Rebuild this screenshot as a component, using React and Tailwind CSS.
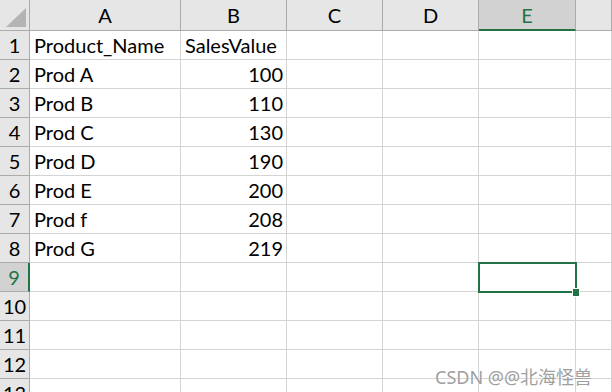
const cols = [
  { key: "A", w: "w-[151px]" },
  { key: "B", w: "w-[106px]" },
  { key: "C", w: "w-[96px]" },
  { key: "D", w: "w-[96px]" },
  { key: "E", w: "w-[97px]" },
  { key: "", w: "flex-1" },
];

const data = [
  ["Product_Name", "SalesValue"],
  ["Prod A", 100],
  ["Prod B", 110],
  ["Prod C", 130],
  ["Prod D", 190],
  ["Prod E", 200],
  ["Prod f", 208],
  ["Prod G", 219],
];

const rowCount = 13;

function Cell({ col, value }) {
  const isNum = typeof value === "number";
  return (
    <div
      className={`${col.w} shrink-0 h-full border-r border-[#d4d4d4] flex items-center overflow-visible whitespace-nowrap ${
        isNum ? "justify-end pr-[3px]" : "pl-[4px]"
      }`}
    >
      {value ?? ""}
    </div>
  );
}

export default function App() {
  return (
    <div
      className="w-[612px] h-[392px] overflow-hidden bg-white text-black text-[20px] relative"
      style={{ fontFamily: "Lato, 'Noto Sans', sans-serif" }}
    >
      {/* column headers */}
      <div className="flex h-[31px] bg-[#e6e6e6] border-b border-[#ababab]">
        <div className="w-[30px] shrink-0 border-r border-[#ababab] relative">
          <svg className="absolute left-[6px] top-[8px]" width="20" height="19" viewBox="0 0 20 19">
            <polygon points="20,0 20,19 0,19" fill="#b4b4b4" />
          </svg>
        </div>
        {cols.map((c, j) => (
          <div
            key={j}
            className={`${c.w} shrink-0 border-r border-[#ababab] flex items-center justify-center ${
              c.key === "E" ? "bg-[#d2d2d2] text-[#217346] border-b-2 border-b-[#217346] -mb-px" : ""
            }`}
          >
            {c.key}
          </div>
        ))}
      </div>

      {/* rows */}
      {Array.from({ length: rowCount }).map((_, i) => {
        const row = data[i] || [];
        const selected = i === 8;
        return (
          <div key={i} className="flex h-[29px] border-b border-[#d4d4d4]">
            <div
              className={`w-[30px] shrink-0 flex items-center justify-center border-b border-[#ababab] -mb-px ${
                selected
                  ? "bg-[#d2d2d2] text-[#217346] border-r-2 border-r-[#217346]"
                  : "bg-[#e6e6e6] border-r border-[#ababab]"
              }`}
            >
              {i + 1}
            </div>
            {cols.map((c, j) => (
              <Cell key={j} col={c} value={row[j]} />
            ))}
          </div>
        );
      })}

      {/* active cell E9 */}
      <div className="absolute left-[478px] top-[262px] w-[99px] h-[31px] border-2 border-[#217346]" />
      <div className="absolute left-[572px] top-[288px] w-[6px] h-[7px] bg-[#217346] border border-white box-content" />

      {/* watermark */}
      <div
        className="absolute left-[435px] top-[364px] text-[18px] text-[#a0a0a0] whitespace-nowrap"
        style={{ fontFamily: "'Noto Sans', 'Noto Sans CJK SC', sans-serif", textShadow: "0 0 2px #fff" }}
      >
        CSDN @@北海怪兽
      </div>
    </div>
  );
}
